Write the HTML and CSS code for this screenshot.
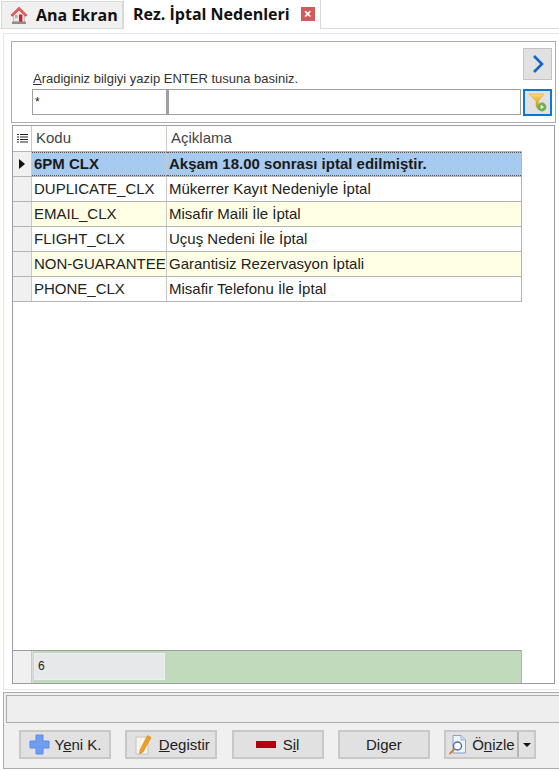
FILE: index.html
```html
<!DOCTYPE html>
<html lang="tr">
<head>
  <meta charset="UTF-8" />
  <title>Rez. İptal Nedenleri</title>
  <link rel="stylesheet" href="styles.css">
</head>
<body>
  <div class="tabs">
    <div class="tab tab-home">
      <svg class="home-icon" width="18" height="19" viewBox="0 0 18 19">
        <path d="M3.5 8.5 L9 3.5 L14.5 8.5 V16 H3.5 Z" fill="#f0e6e0" stroke="#b9a9a2" stroke-width=".7"/>
        <path d="M9 1 L.8 9 L2.4 10.4 L9 4.2 L15.6 10.4 L17.2 9 Z" fill="#e2615c" stroke="#b7423e" stroke-width=".5"/>
        <rect x="9" y="8.5" width="3.4" height="7.5" fill="#cf2230"/>
        <rect x="5" y="9" width="2.6" height="3" fill="#9fb4c8"/>
        <rect x="2" y="15.6" width="14" height="2.4" fill="#8d8d8d"/>
      </svg>
      Ana Ekran
    </div>
    <div class="tab tab-active">
      Rez. İptal Nedenleri
      <span class="tab-close">×</span>
    </div>
  </div>

  <div class="content">
    <section class="search">
      <div class="search-left">
        <div class="search-hint"><u>A</u>radiginiz bilgiyi yazip ENTER tusuna basiniz.</div>
        <div class="search-inputs">
          <div class="field field-code">*</div>
          <div class="field field-text"></div>
        </div>
      </div>
      <div class="search-btns">
        <div class="btn-next">
          <svg width="14" height="20" viewBox="0 0 14 20"><path d="M3 2 L11 10 L3 18" fill="none" stroke="#1464c8" stroke-width="2.6"/></svg>
        </div>
        <div class="btn-filter">
          <svg width="21" height="21" viewBox="0 0 21 21">
            <defs>
              <linearGradient id="funnel" x1="0" y1="0" x2="0" y2="1">
                <stop offset="0" stop-color="#f7dc7a"/>
                <stop offset=".5" stop-color="#e8ad1c"/>
                <stop offset="1" stop-color="#b98a12"/>
              </linearGradient>
            </defs>
            <path d="M2 2 H17 L11.5 9 V18 L9 14 V9 Z" fill="url(#funnel)" stroke="#c9a035" stroke-width=".4"/>
            <circle cx="15" cy="15" r="4.4" fill="#6db04e"/>
            <path d="M13.6 12.8 L17.2 15 L13.6 17.2 Z" fill="#e8f4df"/>
          </svg>
        </div>
      </div>
    </section>

    <section class="grid">
      <div class="row row-head">
        <div class="cell-ind">
          <svg width="11" height="11" viewBox="0 0 11 11"><path d="M0 1.5H2M3 1.5H11M0 4H2M3 4H11M0 6.5H2M3 6.5H11M0 9H2M3 9H11" stroke="#222" stroke-width="1"/></svg>
        </div>
        <div class="cell-code">Kodu</div>
        <div class="cell-desc">Açiklama</div>
      </div>
      <div class="row row-current">
        <div class="cell-ind"><span class="arrow"></span></div>
        <div class="cell-code">6PM CLX</div>
        <div class="cell-desc">Akşam 18.00 sonrası iptal edilmiştir.</div>
      </div>
      <div class="row">
        <div class="cell-ind"></div>
        <div class="cell-code">DUPLICATE_CLX</div>
        <div class="cell-desc">Mükerrer Kayıt Nedeniyle İptal</div>
      </div>
      <div class="row row-alt">
        <div class="cell-ind"></div>
        <div class="cell-code">EMAIL_CLX</div>
        <div class="cell-desc">Misafir Maili İle İptal</div>
      </div>
      <div class="row">
        <div class="cell-ind"></div>
        <div class="cell-code">FLIGHT_CLX</div>
        <div class="cell-desc">Uçuş Nedeni İle İptal</div>
      </div>
      <div class="row row-alt">
        <div class="cell-ind"></div>
        <div class="cell-code">NON-GUARANTEE</div>
        <div class="cell-desc">Garantisiz Rezervasyon İptali</div>
      </div>
      <div class="row">
        <div class="cell-ind"></div>
        <div class="cell-code">PHONE_CLX</div>
        <div class="cell-desc">Misafir Telefonu İle İptal</div>
      </div>
      <div class="grid-space"></div>
      <div class="footer-row">
        <div class="cell-ind"></div>
        <div class="footer-sum">
          <div class="footer-count">6</div>
        </div>
      </div>
    </section>
  </div>

  <div class="bottom">
    <div class="status"></div>
    <div class="actions">
      <div class="btn btn-new">
        <svg width="21" height="21" viewBox="0 0 21 21"><path d="M7 1H14V7H20V14H14V20H7V14H1V7H7Z" fill="#6f9df0" stroke="#5f8be8"/></svg>
        <span>Y<u>e</u>ni K.</span>
      </div>
      <div class="btn btn-edit">
        <svg width="22" height="22" viewBox="0 0 22 22">
          <path d="M3 3H15V20H3Z" fill="#f6f3ea" stroke="#c4c4c4"/>
          <path d="M14.5 1.5 L18 3.5 L10 18 L6.5 20 L7 16 Z" fill="#f0a020" stroke="#d08415" stroke-width=".6"/>
        </svg>
        <span><u>D</u>egistir</span>
      </div>
      <div class="btn btn-del">
        <span class="del-icon"></span>
        <span>S<u>i</u>l</span>
      </div>
      <div class="btn btn-more"><span>Di<u>g</u>er</span></div>
      <div class="btn-split">
        <div class="btn-preview">
          <svg width="22" height="22" viewBox="0 0 22 22">
            <path d="M6 1.5H14L18.5 6V19H6Z" fill="#eef2fb" stroke="#8aa0cc"/>
            <path d="M14 1.5V6H18.5" fill="#cfdbf2" stroke="#8aa0cc" stroke-width=".7"/>
            <circle cx="10.5" cy="12" r="4" fill="#fff" stroke="#4a6fb0" stroke-width="1.4"/>
            <path d="M7.5 15 L2.5 20" stroke="#d98030" stroke-width="2"/>
          </svg>
          <span>Ö<u>n</u>izle</span>
        </div>
        <div class="btn-drop"><span class="drop-arrow"></span></div>
      </div>
    </div>
  </div>
</body>
</html>
```

FILE: styles.css
```css
* {
  box-sizing: border-box;
}

body {
  margin: 0;
  width: 559px;
  height: 771px;
  overflow: hidden;
  background: #fff;
  color: #222;
  font-family: "Liberation Sans", Arial, sans-serif;
  font-size: 15px;
}

/* tabs */
.tabs {
  display: flex;
  height: 29px;
  padding-left: 1px;
  align-items: flex-end;
  border-bottom: 1px solid #d9d9d9;
}

.tab {
  display: flex;
  align-items: center;
  font-family: "Open Sans", sans-serif;
  font-weight: 700;
  color: #111;
  font-size: 16px;
}

.tab-home {
  width: 122px;
  height: 27px;
  padding-left: 8px;
  gap: 8px;
  background: #f0f0f0;
  border: 1px solid #d9d9d9;
  border-bottom: none;
}

.tab-active {
  width: 198px;
  height: 29px;
  margin-bottom: -1px;
  padding: 0 0 2px 9px;
  background: #fff;
  border: 1px solid #d9d9d9;
  border-bottom: none;
  border-top: none;
}

.tab-close {
  width: 14px;
  height: 14px;
  margin-left: 11px;
  background: #cf5b5f;
  color: #fff;
  font-size: 14px;
  line-height: 14px;
  text-align: center;
}

/* main area */
.content {
  height: 657px;
  margin: 4px 0 0 3px;
  padding: 7px 3px 5px 7px;
  background: #fff;
  border: 1px solid #e6e6e6;
  border-right: none;
  display: flex;
  flex-direction: column;
  gap: 2px;
}

.search {
  height: 82px;
  display: flex;
  justify-content: space-between;
  padding: 6px 3px 0 20px;
  background: #fff;
  border: 1px solid #a9adb3;
  flex-shrink: 0;
}

.search-hint {
  margin-top: 21px;
  height: 20px;
  padding-left: 1px;
  font-size: 13px;
  line-height: 19px;
  color: #333;
}

.search-inputs {
  display: flex;
  width: 489px;
}

.field {
  height: 26px;
  border: 1px solid #a0a0a0;
  font-size: 12px;
  padding: 5px 2px;
}

.field-code {
  width: 135px;
}

.field-text {
  flex: 1;
  border-left-width: 2px;
}

.search-btns {
  display: flex;
  flex-direction: column;
  gap: 9px;
}

.btn-next {
  width: 29px;
  height: 32px;
  background: #e1e1e1;
  border: 1px solid #c4c4c4;
  display: flex;
  align-items: center;
  justify-content: center;
}

.btn-filter {
  width: 29px;
  height: 27px;
  background: #e1e1e1;
  border: 2px solid #0a78d7;
  display: flex;
  align-items: center;
  justify-content: center;
}

/* grid */
.grid {
  flex: 1;
  margin: 0 1px 0 1px;
  background: #fff;
  border: 1px solid #9a9ea4;
  display: flex;
  flex-direction: column;
}

.row {
  display: flex;
  height: 25px;
  width: 509px;
  border-bottom: 1px solid #b4b4b4;
  border-right: 1px solid #b4b4b4;
  line-height: 24px;
  flex-shrink: 0;
}

.cell-ind {
  width: 19px;
  background: #f0f0f0;
  border-right: 1px solid #c8c8c8;
  display: flex;
  align-items: center;
  justify-content: center;
  flex-shrink: 0;
}

.cell-code {
  width: 135px;
  padding-left: 2px;
  border-right: 1px solid #c8c8c8;
  white-space: nowrap;
  overflow: hidden;
  flex-shrink: 0;
}

.cell-desc {
  flex: 1;
  padding-left: 2px;
  white-space: nowrap;
}

.row-head {
  height: 26px;
  color: #444;
  border-right: none;
}

.row-head .cell-ind {
  background: #fff;
}

.row-head .cell-code,
.row-head .cell-desc {
  padding-left: 4px;
}

.row-current {
  background: #a6caf0;
  font-weight: 700;
  color: #1a1a1a;
}

.row-current .cell-code,
.row-current .cell-desc {
  border-top: 1px dotted #555;
  border-bottom: 1px dotted #555;
  line-height: 22px;
}

.row-alt {
  background: #ffffe6;
}

.arrow {
  width: 0;
  height: 0;
  border-left: 6px solid #111;
  border-top: 5px solid transparent;
  border-bottom: 5px solid transparent;
}

.grid-space {
  flex: 1;
}

.footer-row {
  display: flex;
  height: 33px;
  width: 509px;
  border-top: 1px solid #9a9ea4;
  border-right: 1px solid #b4b4b4;
  flex-shrink: 0;
}

.footer-sum {
  flex: 1;
  background: #c0dabb;
  padding: 2px 0 3px 1px;
  border-left: 1px solid #ddd;
}

.footer-count {
  width: 131px;
  height: 100%;
  background: #e6e8ea;
  border: 1px solid #eee;
  padding-left: 3px;
  font-size: 12px;
  line-height: 25px;
}

/* bottom bar */
.bottom {
  height: 77px;
  margin: 2px 0 0 3px;
  padding-top: 2px;
  background: #f0f0f0;
  border: 1px solid #a9adb3;
  border-right: none;
}

.status {
  height: 28px;
  margin-left: 2px;
  background: #eeeeee;
  border: 1px solid #a9adb3;
  border-right: none;
}

.actions {
  display: flex;
  gap: 14.3px;
  padding: 7px 0 0 15px;
}

.btn,
.btn-split {
  width: 92px;
  height: 29px;
  background: #e1e1e1;
  border: 2px solid #c8c8c8;
  display: flex;
  align-items: center;
  justify-content: center;
  gap: 4px;
  color: #222;
}

.btn-new {
  gap: 5px;
}

.btn-del {
  gap: 7px;
}

.del-icon {
  width: 20px;
  height: 7px;
  background: #b00010;
}

.btn-split {
  gap: 0;
  justify-content: flex-start;
}

.btn-preview {
  width: 73px;
  height: 100%;
  display: flex;
  align-items: center;
  gap: 3px;
  padding-left: 1px;
  border-right: 2px solid #b4b4b4;
}

.btn-drop {
  flex: 1;
  display: flex;
  align-items: center;
  justify-content: center;
}

.drop-arrow {
  width: 0;
  height: 0;
  border-top: 4px solid #111;
  border-left: 4px solid transparent;
  border-right: 4px solid transparent;
}
```
